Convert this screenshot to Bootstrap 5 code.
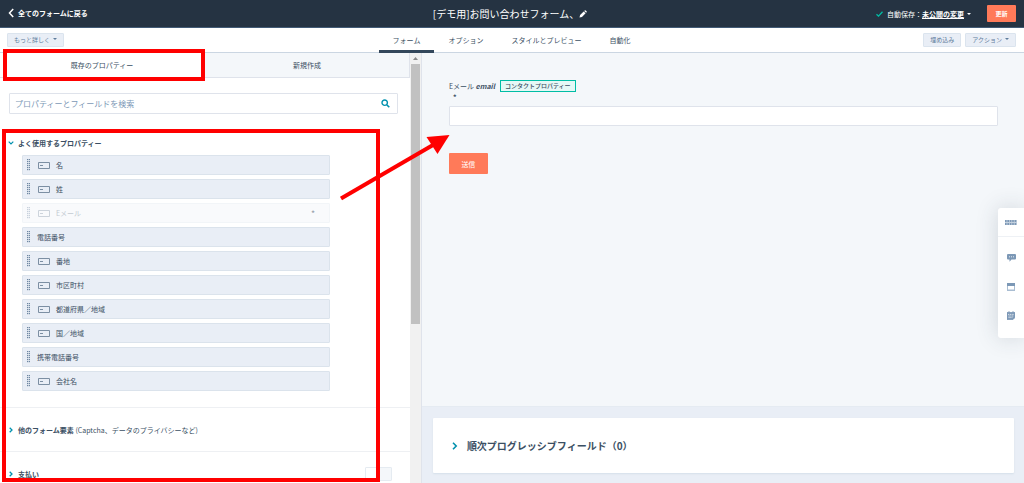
<!DOCTYPE html>
<html lang="ja">
<head>
<meta charset="utf-8">
<meta name="viewport" content="width=device-width, initial-scale=1">
<title>[デモ用]お問い合わせフォーム</title>
<link href="https://cdn.jsdelivr.net/npm/bootstrap@5.3.0/dist/css/bootstrap.min.css" rel="stylesheet">
<style>
  :root { --ink:#3b4f63; --line:#dfe3eb; --navy:#253342; --pale:#f4f7fa; --fog:#e9eef6; --coral:#ff7a59; --teal:#0091ae; --mark-red:#ff0000; }
  body { font-family:"Noto Sans CJK JP","Noto Sans",sans-serif; font-size:7px; line-height:10px; color:var(--ink); background:var(--pale); height:100vh; overflow:hidden; }
  a { color:inherit; text-decoration:none; }
  svg { display:block; flex:none; }
  button { font-family:inherit; }
  .topbar { height:28px; background:var(--navy); color:#fff; border-bottom:1px solid #425b76; padding:0 8px; }
  .form-title { font-size:10px; line-height:16px; font-weight:400; padding-right:4px; }
  .dropdown-toggle::after { border-width:2px; border-bottom:0; margin-left:3px; vertical-align:2px; }
  .btn-coral { background:var(--coral); color:#fff; border:0; border-radius:1px; font-size:7px; line-height:10px; }
  .btn-coral:hover { background:#ff8f73; color:#fff; }
  .btn-update { font-size:6px; width:29px; height:17px; padding:0; }
  .toolbar { height:25px; background:#fff; border-bottom:1px solid #cbd6e2; padding:0 8px 0 7px; }
  .btn-fog { background:var(--fog); border:1px solid #dbe4ee; border-radius:1px; color:#5f7c9c; font-size:6px; line-height:9px; padding:1px 6px 2px; }
  .main-tabs .nav-link { color:var(--ink); font-size:7px; line-height:10px; padding:7px 14px 5px; border-bottom:3px solid transparent; border-radius:0; height:25px; }
  .main-tabs .nav-link.active { border-bottom-color:#33475b; }
  .workspace { min-height:0; }
  .side { width:41.2%; background:#fff; border-right:1px solid var(--line); }
  .side-tab { height:25px; background:var(--pale); border:0; border-bottom:1px solid var(--line); color:var(--ink); padding:0; }
  .side-tab.active { background:#fff; border-right:1px solid var(--line); }
  .side-tab-wrap:last-child .side-tab { border-right:1px solid var(--line); }
  .search-box { margin:15px 12px 0 9px; height:21px; border:1px solid var(--line); border-radius:1px; padding-right:7px; }
  .search-box input { border:0; background:transparent; font-size:8px; line-height:12px; padding:0 5px; color:var(--ink); min-width:0; outline:0; }
  .search-box input::placeholder { color:#7c98b6; opacity:1; }
  .group-head { font-size:7px; line-height:10px; font-weight:700; margin:0; }
  .group-common { padding:24px 8px 7px; }
  .prop-list { margin:0 80px 16px 22px; display:grid; gap:4px; padding:0; list-style:none; }
  .prop-list li { height:20px; background:var(--fog); border:1px solid #dbe3ec; border-radius:1px; padding-left:4px; gap:7px; }
  .prop-list li.used { background:#f9fafc; border-color:#f2f5f8; color:#c3cad2; padding-right:14px; }
  .used svg { opacity:.35; }
  .used b { color:#9aa3ad; }
  .prop-list .prop-icon { margin:0 -1px 0 1px; }
  .group-row { height:44px; border-top:1px solid #eef0f3; padding:0 18px 0 8px; }
  .pay-toggle { width:27px; height:14px; border:1px solid #e5ebf1; border-radius:1px; background:linear-gradient(90deg,#fff 50%,var(--pale) 50%); padding:0; }
  .scroll-rail { width:11px; background:#f1f1f1; padding:0 1px; }
  .scroll-up { height:11px; }
  .scroll-thumb { background:#c1c1c1; height:60.5%; }
  .canvas-area { padding:27px 26px 0 27px; }
  .field-tag { font-size:6px; line-height:10px; border:1px solid #00bda5; background:#e5f8f6; font-weight:500; padding:0 4px; margin-left:5px; }
  .email-input { height:20px; border:1px solid var(--line); border-radius:1px; padding:0 4px; font-size:8px; background:#fff; }
  .btn-send { margin-top:27px; width:39px; height:21px; padding:0; }
  .progressive { background:var(--fog); padding:11px 10px 10px 11px; border-top:1px solid #e5ebf2; }
  .progressive-card { background:#fff; height:55px; padding:0 18px; gap:8px; border-radius:1px; box-shadow:0 1px 2px #d5dfe9; }
  .progressive-card h2 { font-size:10px; line-height:16px; margin:0; font-weight:700; }
  .tool-dock { position:absolute; right:0; top:155px; width:26px; background:#fff; border-radius:3px 0 0 3px; box-shadow:0 0 22px rgba(45,62,80,.18); }
  .tool-dock button { border:0; background:transparent; padding:0; height:29px; display:flex; align-items:center; justify-content:center; color:#7c98b6; }
  .tool-dock .dock-grip { border-bottom:1px solid #eef1f5; }
  .dock-tools { padding:6px 0 8px; }
  .mark-tab-row { height:25px; }
  .mark-tab-col { width:48.6%; }
  .outline-mark { position:absolute; border:4px solid var(--mark-red); pointer-events:none; z-index:3; }
  .mark-tab { top:-4px; left:3px; right:0; bottom:-3px; }
  .mark-list { top:76px; left:2px; right:41px; bottom:1px; }
  .mark-arrow { position:absolute; left:340px; top:81px; z-index:4; pointer-events:none; }
</style>
</head>
<body class="d-flex flex-column">
<svg width="0" height="0" class="position-absolute" aria-hidden="true">
  <symbol id="grip" viewBox="0 0 3 12"><path d="M.5 0v12M2.5 0v12" stroke="#6f87a2" stroke-width="1" stroke-dasharray="1.2 .8"/><path d="M1.5 0v12" stroke="#b9c6d5" stroke-dasharray="1.2 .8"/></symbol>
  <symbol id="textfield" viewBox="0 0 12 7"><path d="M.5.5h11v6H.5zM2 3.500h3" fill="none" stroke="#7c8fa3"/></symbol>
  <symbol id="chev" viewBox="0 0 4 6"><path d="M.7.7 3 3 .7 5.300" fill="none" stroke="#0091ae" stroke-width="1.300"/></symbol>
</svg>

<header class="topbar d-flex align-items-center flex-shrink-0">
  <div class="flex-fill w-25">
    <a href="#" class="d-inline-flex align-items-center gap-1 fw-bold"><svg width="6" height="10" viewBox="0 0 6 10"><path d="M5.200 1 1.500 5l3.700 4" fill="none" stroke="#fff" stroke-width="1.500"/></svg>全てのフォームに戻る</a>
  </div>
  <h1 class="form-title d-flex align-items-center m-0">[デモ用]お問い合わせフォーム、<svg width="8" height="8" viewBox="0 0 8 8"><path d="M.5 7.500 1.100 5 4.700 1.400l1.900 1.900L3 6.900zM5.200.9l.5-.5q.5-.4 1 0l.9.9q.4.5 0 1l-.5.5z" fill="#fff"/></svg></h1>
  <div class="flex-fill w-25 d-flex justify-content-end align-items-center">
    <svg class="me-1" width="7" height="6" viewBox="0 0 7 6"><path d="m.5 3.200 2 1.900L6.500.8" fill="none" stroke="#00bda5" stroke-width="1.300"/></svg>
    <span>自動保存：</span><a href="#" class="dropdown-toggle fw-bold"><u>未公開の変更</u></a>
    <button type="button" class="btn btn-coral btn-update ms-3 fw-bold">更新</button>
  </div>
</header>

<div class="toolbar d-flex align-items-center flex-shrink-0">
  <div class="flex-fill w-25 d-flex"><button type="button" class="btn btn-fog dropdown-toggle">もっと詳しく</button></div>
  <ul class="nav main-tabs flex-nowrap">
    <li><a class="nav-link active" href="#">フォーム</a></li>
    <li><a class="nav-link" href="#">オプション</a></li>
    <li><a class="nav-link" href="#">スタイルとプレビュー</a></li>
    <li><a class="nav-link" href="#">自動化</a></li>
  </ul>
  <div class="flex-fill w-25 d-flex justify-content-end">
    <button type="button" class="btn btn-fog me-1">埋め込み</button>
    <button type="button" class="btn btn-fog dropdown-toggle">アクション</button>
  </div>
</div>

<div class="workspace d-flex flex-fill position-relative">
  <aside class="side d-flex position-relative flex-shrink-0">
    <div class="flex-fill d-flex flex-column overflow-hidden">
      <div class="d-flex flex-shrink-0">
        <div class="w-50 side-tab-wrap"><button type="button" class="side-tab active w-100">既存のプロパティー</button></div>
        <div class="w-50 side-tab-wrap"><button type="button" class="side-tab w-100">新規作成</button></div>
      </div>
      <label class="search-box d-flex align-items-center flex-shrink-0">
        <input type="search" class="flex-fill" placeholder="プロパティーとフィールドを検索" aria-label="プロパティーとフィールドを検索">
        <svg width="9" height="9" viewBox="0 0 9 9"><circle cx="3.700" cy="3.700" r="2.700" fill="none" stroke="#0091ae" stroke-width="1.400"/><path d="m5.700 5.700 2.600 2.600" stroke="#0091ae" stroke-width="1.600"/></svg>
      </label>
      <section class="flex-shrink-0">
        <h2 class="group-head group-common d-flex align-items-center gap-1"><svg width="6" height="4" viewBox="0 0 6 4"><path d="M.7.7 3 3 5.300.7" fill="none" stroke="#0091ae" stroke-width="1.200"/></svg>よく使用するプロパティー</h2>
        <ul class="prop-list">
          <li class="d-flex align-items-center"><svg width="3" height="12"><use href="#grip"/></svg><svg class="prop-icon" width="12" height="7"><use href="#textfield"/></svg><span>名</span></li>
          <li class="d-flex align-items-center"><svg width="3" height="12"><use href="#grip"/></svg><svg class="prop-icon" width="12" height="7"><use href="#textfield"/></svg><span>姓</span></li>
          <li class="d-flex align-items-center used"><svg width="3" height="12"><use href="#grip"/></svg><svg class="prop-icon" width="12" height="7"><use href="#textfield"/></svg><span>Eメール</span><b class="ms-auto">*</b></li>
          <li class="d-flex align-items-center"><svg width="3" height="12"><use href="#grip"/></svg><span>電話番号</span></li>
          <li class="d-flex align-items-center"><svg width="3" height="12"><use href="#grip"/></svg><svg class="prop-icon" width="12" height="7"><use href="#textfield"/></svg><span>番地</span></li>
          <li class="d-flex align-items-center"><svg width="3" height="12"><use href="#grip"/></svg><svg class="prop-icon" width="12" height="7"><use href="#textfield"/></svg><span>市区町村</span></li>
          <li class="d-flex align-items-center"><svg width="3" height="12"><use href="#grip"/></svg><svg class="prop-icon" width="12" height="7"><use href="#textfield"/></svg><span>都道府県／地域</span></li>
          <li class="d-flex align-items-center"><svg width="3" height="12"><use href="#grip"/></svg><svg class="prop-icon" width="12" height="7"><use href="#textfield"/></svg><span>国／地域</span></li>
          <li class="d-flex align-items-center"><svg width="3" height="12"><use href="#grip"/></svg><span>携帯電話番号</span></li>
          <li class="d-flex align-items-center"><svg width="3" height="12"><use href="#grip"/></svg><svg class="prop-icon" width="12" height="7"><use href="#textfield"/></svg><span>会社名</span></li>
        </ul>
      </section>
      <section class="group-row d-flex align-items-center flex-shrink-0">
        <svg class="me-1" width="6" height="6"><use href="#chev"/></svg>
        <h2 class="group-head">他のフォーム要素 <span class="fw-normal">(Captcha、データのプライバシーなど)</span></h2>
      </section>
      <section class="group-row d-flex align-items-center flex-shrink-0">
        <svg class="me-1" width="6" height="6"><use href="#chev"/></svg>
        <h2 class="group-head">支払い</h2>
        <button type="button" class="pay-toggle ms-auto" aria-label="支払い"></button>
      </section>
    </div>
    <div class="scroll-rail flex-shrink-0">
      <div class="scroll-up d-flex align-items-center justify-content-center"><svg width="5" height="3" viewBox="0 0 5 3"><path d="M0 3 2.500 0 5 3z" fill="#8a8a8a"/></svg></div>
      <div class="scroll-thumb"></div>
    </div>
    <div class="mark-tab-row position-absolute top-0 start-0 w-100 pe-none">
      <div class="mark-tab-col position-relative h-100"><div class="outline-mark mark-tab"></div></div>
    </div>
    <div class="outline-mark mark-list"></div>
    <svg class="mark-arrow" width="110" height="68" viewBox="0 0 110 68"><path d="M1 64.500 93 11" stroke="#f00" stroke-width="4"/><path d="M109.500 1 86.500 3l11 17z" fill="#f00"/></svg>
  </aside>

  <main class="flex-fill d-flex flex-column">
    <form class="canvas-area flex-fill">
      <div class="d-flex align-items-center"><label for="email">Eメール <b class="fst-italic">email</b></label><span class="field-tag">コンタクトプロパティー</span></div>
      <div class="ps-1 fw-bold">*</div>
      <input id="email" type="email" class="email-input w-100 d-block mt-1">
      <button type="button" class="btn btn-coral btn-send">送信</button>
    </form>
    <section class="progressive">
      <div class="progressive-card d-flex align-items-center"><svg width="8" height="8" viewBox="0 0 8 8"><path d="M2 .8 5.200 4 2 7.200" fill="none" stroke="#0091ae" stroke-width="1.600"/></svg><h2>順次プログレッシブフィールド（0）</h2></div>
    </section>
  </main>

  <nav class="tool-dock" aria-label="ツール">
    <button type="button" class="w-100 dock-grip" aria-label="移動"><svg width="12" height="5" viewBox="0 0 12 5"><path d="M0 2.500h12" stroke="#c3d0de" stroke-width="5"/><path d="M0 1h12M0 4h12" stroke="currentColor" stroke-width="2" stroke-dasharray="1.600 .8"/></svg></button>
    <div class="dock-tools">
      <button type="button" class="w-100" aria-label="コメント"><svg width="9" height="8" viewBox="0 0 9 8"><path d="M1 0h7q1 0 1 1v3.500q0 1-1 1H4.500L2.500 7.800V5.500H1q-1 0-1-1V1q0-1 1-1z" fill="currentColor"/><path d="M2 2.800h5" stroke="#fff" stroke-width=".8" stroke-dasharray="1 1"/></svg></button>
      <button type="button" class="w-100" aria-label="ウィンドウ"><svg width="8" height="8" viewBox="0 0 8 8"><path d="M.5.5h7v7h-7z" fill="#fff" stroke="#a9bdd2"/><path d="M0 0h8v3H0z" fill="currentColor"/><path d="M0 6.500h8V8H0z" fill="#a9bdd2"/></svg></button>
      <button type="button" class="w-100" aria-label="カレンダー"><svg width="8" height="9" viewBox="0 0 8 9"><path d="M0 1.500h8V6.500L6 8.500H0zM2 0v2M6 0v2" fill="currentColor" stroke="currentColor" stroke-width=".8"/><path d="M1 3.400h6M1.500 5h5M1.500 6.600h4" stroke="#fff" stroke-width=".7" stroke-dasharray="1.200 .6"/></svg></button>
    </div>
  </nav>
</div>
<script src="https://cdn.jsdelivr.net/npm/bootstrap@5.3.0/dist/js/bootstrap.bundle.min.js"></script>
</body>
</html>
